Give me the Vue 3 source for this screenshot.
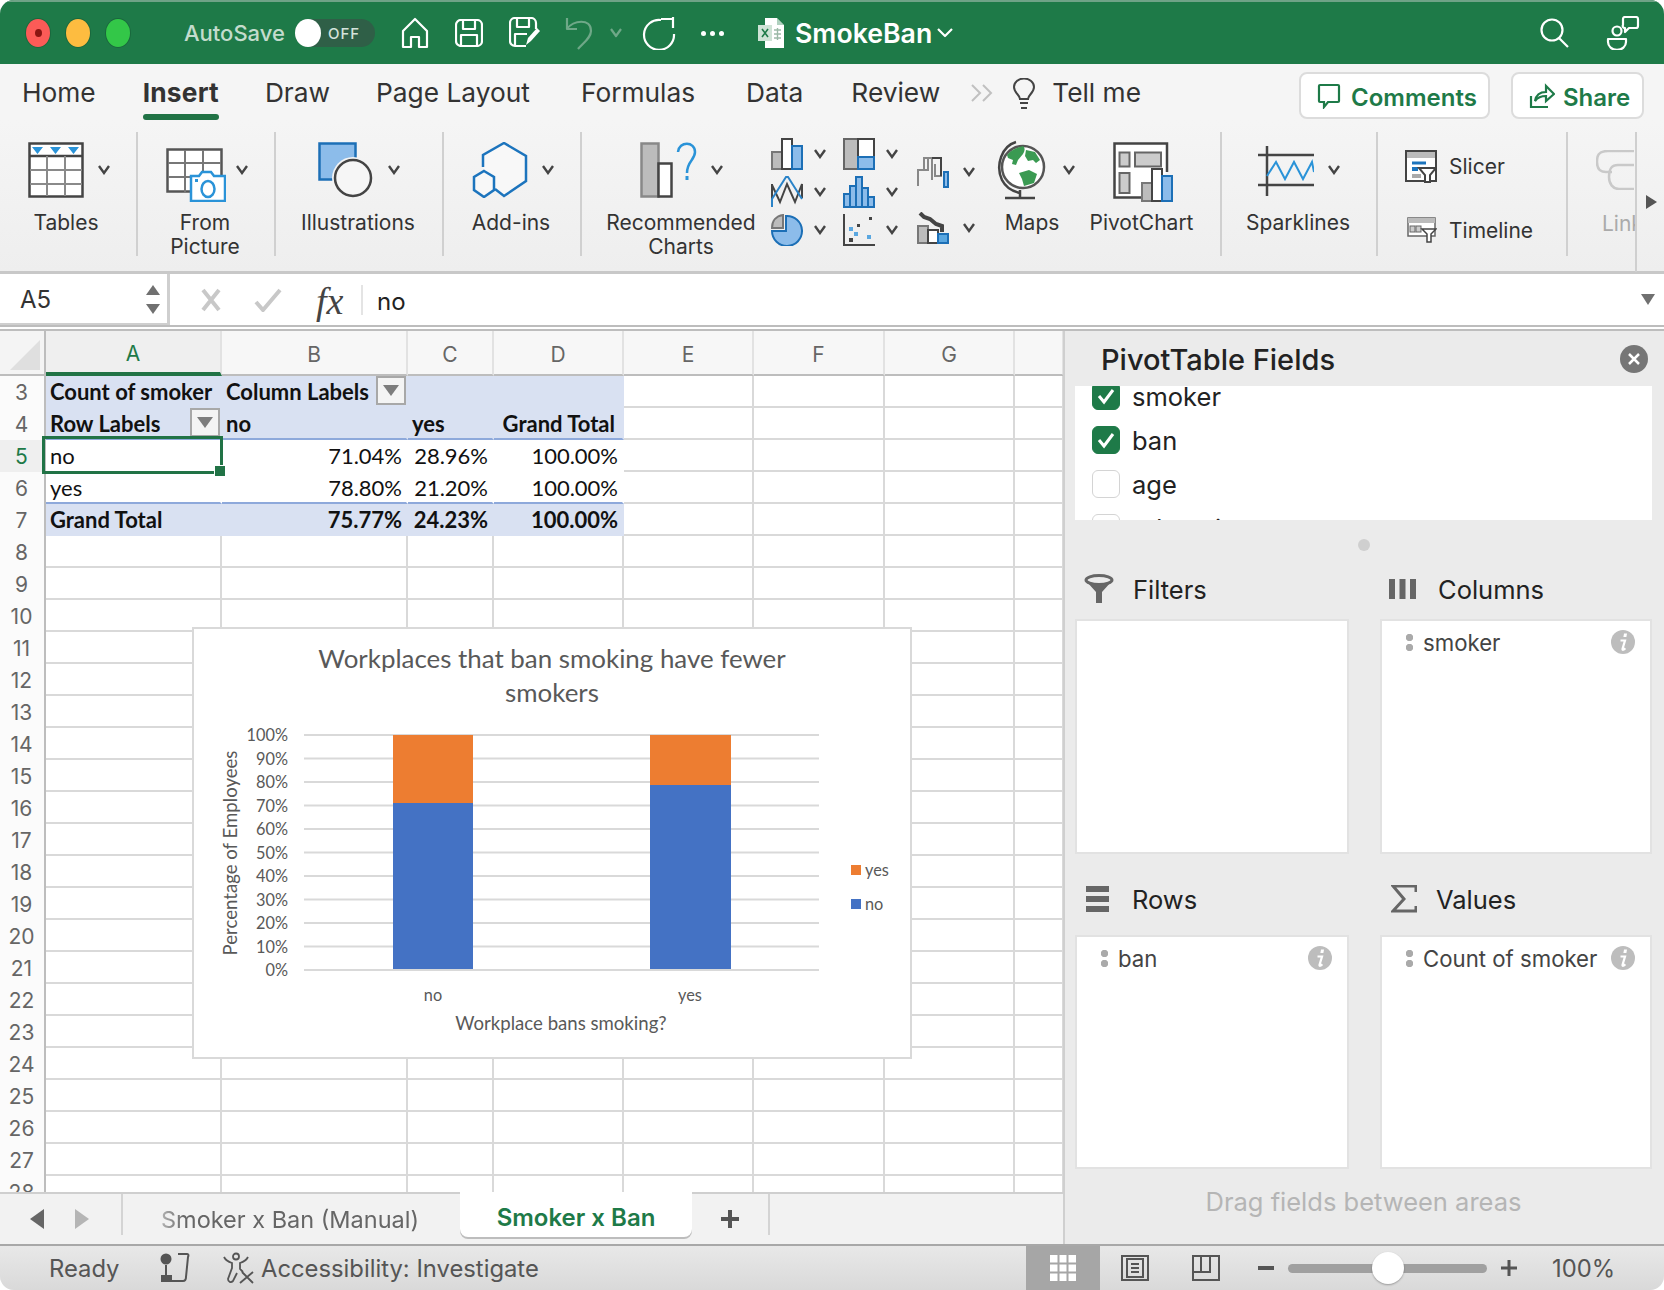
<script setup>
const tabs = ['Home', 'Insert', 'Draw', 'Page Layout', 'Formulas', 'Data', 'Review']

const columns = [
  { name: 'A', w: 176 },
  { name: 'B', w: 186 },
  { name: 'C', w: 86 },
  { name: 'D', w: 130 },
  { name: 'E', w: 130 },
  { name: 'F', w: 131 },
  { name: 'G', w: 130 },
  { name: '', w: 49 },
]
const gridCols = '46px ' + columns.map((c) => c.w + 'px').join(' ')

const pivot = {
  3: ['Count of smoker', 'Column Labels', '', ''],
  4: ['Row Labels', 'no', 'yes', 'Grand Total'],
  5: ['no', '71.04%', '28.96%', '100.00%'],
  6: ['yes', '78.80%', '21.20%', '100.00%'],
  7: ['Grand Total', '75.77%', '24.23%', '100.00%'],
}
const rows = []
for (let n = 3; n <= 28; n++) rows.push(n)

function cellText(row, col) {
  return pivot[row] && col < 4 ? pivot[row][col] : ''
}
function cellClass(row, col) {
  if (!pivot[row] || col > 3) return ''
  const c = []
  if (row === 3 || row === 4 || row === 7) c.push('fill', 'bold')
  else c.push('plain')
  if (row === 4 || row === 6) c.push('blue-line')
  if (col > 0 && row >= 5) c.push('right')
  if (row === 4 && col === 3) c.push('right', 'nudge')
  return c.join(' ')
}
function hasFilter(row, col) {
  return (row === 3 && col === 1) || (row === 4 && col === 0)
}

const ticks = []
for (let i = 0; i <= 10; i++) {
  ticks.push({ label: (100 - i * 10) + '%', y: 108 + i * 23.5 })
}
</script>

<template>
  <div class="window">
    <!-- title bar -->
    <header class="titlebar">
      <span class="light red"><i></i></span>
      <span class="light amber"></span>
      <span class="light green"></span>
      <span class="autosave">AutoSave</span>
      <span class="toggle"><b></b><em>OFF</em></span>
      <svg class="qa home" width="28" height="32" viewBox="0 0 28 32"><path d="M2 30V14L14 2l12 12v16h-8V20h-8v10z" /></svg>
      <svg class="qa save" width="28" height="28" viewBox="0 0 28 28"><rect x="1" y="1" width="26" height="26" rx="5" /><path d="M8 1v9h12V1M6 27V16h16v11" /></svg>
      <svg class="qa saveas" width="32" height="32" viewBox="0 0 32 32"><path d="M17 29H6a5 5 0 0 1-5-5V6a5 5 0 0 1 5-5h16a5 5 0 0 1 5 5v6M8 1v9h12V1M6 29V17h12" /><path class="solid" d="M17 28l2-7 9-10 3 3-9 10-5 4z" /></svg>
      <svg class="qa undo" width="30" height="34" viewBox="0 0 30 34"><path d="M3 2v11h10M3 13C9 4 27 2 27 15c0 7-8 12-13 18" /></svg>
      <svg class="qa undo-chev" width="12" height="10" viewBox="0 0 12 10"><path d="M1 1l5 7 5-7" /></svg>
      <svg class="qa redo" width="34" height="34" viewBox="0 0 34 34"><path d="M19 4a15 15 0 1 0 13 14M19 3h12V1M31 3v9" /></svg>
      <span class="more"><i></i><i></i><i></i></span>
      <svg class="file" width="26" height="30" viewBox="0 0 26 30"><path fill="#fff" d="M7 0h12l7 7v23H7z" /><path fill="#1e7a48" d="M19 0v7h7z" opacity=".35" /><rect y="7" width="14" height="16" fill="#cfe3d6" /><path d="M4 11l6 8M10 11l-6 8" stroke="#1e7a48" stroke-width="1.6" /><path d="M16 12h7M16 16h7M16 20h7M19.500 10v12" stroke="#9bb9a7" stroke-width="1.4" /></svg>
      <span class="docname">SmokeBan</span>
      <svg class="qa docchev" width="16" height="10" viewBox="0 0 16 10"><path d="M1 1l7 7 7-7" /></svg>
      <svg class="qa search" width="30" height="30" viewBox="0 0 30 30"><circle cx="12" cy="12" r="10.500" /><path d="M19 20l9 9" /></svg>
      <svg class="qa people" width="34" height="34" viewBox="0 0 34 34"><circle cx="11" cy="15" r="4.500" /><path d="M2 23h18v3a8 7 0 0 1-18 0z" /><path d="M17 9V3a2 2 0 0 1 2-2h11a2 2 0 0 1 2 2v7a2 2 0 0 1-2 2h-7l-4 4v-4a2 2 0 0 1-2-3z" /></svg>
    </header>

    <!-- ribbon tabs -->
    <nav class="tabrow">
      <span v-for="t in tabs" :key="t" class="tab" :class="{ active: t === 'Insert' }">{{ t }}</span>
      <svg class="overflow" width="24" height="20" viewBox="0 0 24 20"><path d="M2 2l8 8-8 8M13 2l8 8-8 8" /></svg>
      <svg class="bulb" width="24" height="32" viewBox="0 0 24 32"><path d="M8 21c0-4-6-6-6-12a10 8.500 0 0 1 20 0c0 6-6 8-6 12z" /><path d="M8 25h8M9 30h6" /></svg>
      <span class="tellme">Tell me</span>
      <button class="rbtn comments">
        <svg width="24" height="26" viewBox="0 0 24 26"><path d="M3 2h18a1 1 0 0 1 1 1v15a1 1 0 0 1-1 1H11l-4 5v-5H3a1 1 0 0 1-1-1V3a1 1 0 0 1 1-1z" /></svg>
        Comments
      </button>
      <button class="rbtn share">
        <svg width="26" height="26" viewBox="0 0 26 26"><path d="M2 13v11h17M6 18c1-6 5-9 11-9V3l8 8-8 7v-5c-5 0-8 1-11 5z" /></svg>
        Share
      </button>
    </nav>

    <!-- ribbon -->
    <section class="ribbon">
      <div class="group" style="width: 138px">
        <div class="item" style="width: 132px">
          <div class="icons" style="padding-left: 28px">
            <svg width="56" height="56" viewBox="0 0 56 56">
              <rect x="1.500" y="1.500" width="53" height="53" fill="#fff" stroke="#444" stroke-width="2.500" />
              <path d="M2 14h52" stroke="#444" stroke-width="2.500" />
              <path d="M2 28h52M2 42h52M19 14v40M37 14v40" stroke="#8a8a8a" stroke-width="2" />
              <path d="M4 5h11l-5.500 7zM22 5h11l-5.500 7zM40 5h11l-5.500 7z" fill="#2a93d8" />
            </svg>
            <svg class="chev" viewBox="0 0 12 10"><path d="M1 1l5 7 5-7" /></svg>
          </div>
          <span class="label">Tables</span>
        </div>
      </div>

      <div class="group" style="width: 138px">
        <div class="item" style="width: 134px">
          <div class="icons" style="padding-left: 28px">
            <svg class="pic-icon" width="60" height="54" viewBox="0 0 60 54">
              <path d="M1.500 1.500h54v42h-54z" fill="#fff" stroke="#555" stroke-width="2.500" />
              <path d="M19 2v42M37 2v42M2 15h53M2 29h53" stroke="#777" stroke-width="2" />
              <path d="M25 28h8l3-4h9l3 4h11v25H25z" fill="#fff" stroke="#2a93d8" stroke-width="2.500" />
              <ellipse cx="42" cy="41" rx="6.500" ry="8" fill="none" stroke="#2a93d8" stroke-width="2.500" />
              <rect x="29" y="31" width="3" height="3" fill="#2a93d8" />
            </svg>
            <svg class="chev tight" viewBox="0 0 12 10"><path d="M1 1l5 7 5-7" /></svg>
          </div>
          <span class="label">From<br />Picture</span>
        </div>
      </div>

      <div class="group" style="width: 168px">
        <div class="item" style="width: 164px">
          <div class="icons" style="padding-left: 42px">
            <svg width="56" height="56" viewBox="0 0 56 56">
              <rect x="1.500" y="1.500" width="36" height="36" fill="#8cbcea" stroke="#1c6fb6" stroke-width="2.500" />
              <circle cx="35" cy="36" r="21" fill="#f3f3f3" />
              <circle cx="35" cy="36" r="18" fill="#f6f6f6" stroke="#444" stroke-width="2.500" />
            </svg>
            <svg class="chev" viewBox="0 0 12 10"><path d="M1 1l5 7 5-7" /></svg>
          </div>
          <span class="label">Illustrations</span>
        </div>
      </div>

      <div class="group" style="width: 138px">
        <div class="item" style="width: 134px">
          <div class="icons" style="padding-left: 28px">
            <svg width="56" height="56" viewBox="0 0 56 56" fill="none" stroke="#1c74bd" stroke-width="2.500">
              <path d="M11 25V13L32 1l22 13v25L32 54l-9-7" fill="#f8f8f8" />
              <path d="M12 29l10 6v13l-10 7-10-7V35z" fill="#f8f8f8" />
            </svg>
            <svg class="chev" viewBox="0 0 12 10"><path d="M1 1l5 7 5-7" /></svg>
          </div>
          <span class="label">Add-ins</span>
        </div>
      </div>

      <div class="group" style="width: 640px">
        <div class="item" style="width: 180px; margin-left: 9px">
          <div class="icons" style="padding-left: 49px">
            <svg width="57" height="56" viewBox="0 0 57 56">
              <rect x="1.500" y="1.500" width="17" height="53" fill="#bcbcbc" stroke="#888" stroke-width="2.500" />
              <rect x="18.500" y="21.500" width="13" height="33" fill="#fff" stroke="#444" stroke-width="2.500" />
              <path d="M38 10c1-11 17-11 17 0 0 8-8 9-8 21" fill="none" stroke="#2a93d8" stroke-width="2.500" />
              <rect x="45.500" y="34" width="3" height="4" fill="#2a93d8" />
            </svg>
            <svg class="chev" viewBox="0 0 12 10"><path d="M1 1l5 7 5-7" /></svg>
          </div>
          <span class="label">Recommended<br />Charts</span>
        </div>

        <div class="gallery">
          <div class="gal-col first">
            <div class="gal-row">
              <svg width="32" height="32" viewBox="0 0 32 32">
                <rect x="1" y="14" width="10" height="17" fill="#bcbcbc" stroke="#777" stroke-width="2" />
                <rect x="11" y="1" width="10" height="30" fill="#fff" stroke="#444" stroke-width="2" />
                <rect x="21" y="8" width="10" height="23" fill="#8cbcea" stroke="#1c6fb6" stroke-width="2" />
              </svg>
              <svg class="chev" viewBox="0 0 12 10"><path d="M1 1l5 7 5-7" /></svg>
            </div>
            <div class="gal-row">
              <svg width="32" height="32" viewBox="0 0 32 32" fill="none" stroke-width="2">
                <path d="M1 8v18M1 9l8 17 7-18 8 18 7-18v14" stroke="#444" />
                <path d="M1 31v-8L15 1h2l14 22" stroke="#2a83c8" />
              </svg>
              <svg class="chev" viewBox="0 0 12 10"><path d="M1 1l5 7 5-7" /></svg>
            </div>
            <div class="gal-row">
              <svg width="32" height="32" viewBox="0 0 32 32">
                <path d="M15 2a15 15 0 1 1-14 15h14z" fill="#8cbcea" stroke="#1c6fb6" stroke-width="2" />
                <path d="M12 1v13H1C1 7 5 2 12 1z" fill="#bcbcbc" stroke="#777" stroke-width="2" />
              </svg>
              <svg class="chev" viewBox="0 0 12 10"><path d="M1 1l5 7 5-7" /></svg>
            </div>
          </div>
          <div class="gal-col second">
            <div class="gal-row">
              <svg width="32" height="32" viewBox="0 0 32 32">
                <rect x="1" y="1" width="14" height="30" fill="#bcbcbc" stroke="#666" stroke-width="2" />
                <rect x="15" y="1" width="16" height="18" fill="#fff" stroke="#444" stroke-width="2" />
                <rect x="15" y="19" width="16" height="12" fill="#8cbcea" stroke="#1c6fb6" stroke-width="2" />
              </svg>
              <svg class="chev" viewBox="0 0 12 10"><path d="M1 1l5 7 5-7" /></svg>
            </div>
            <div class="gal-row">
              <svg width="32" height="32" viewBox="0 0 32 32" fill="#8cbcea" stroke="#1c6fb6" stroke-width="2">
                <rect x="1" y="18" width="6" height="13" />
                <rect x="7" y="10" width="6" height="21" />
                <rect x="13" y="1" width="6" height="30" />
                <rect x="19" y="12" width="6" height="19" />
                <rect x="25" y="21" width="6" height="10" />
              </svg>
              <svg class="chev" viewBox="0 0 12 10"><path d="M1 1l5 7 5-7" /></svg>
            </div>
            <div class="gal-row">
              <svg width="32" height="32" viewBox="0 0 32 32">
                <path d="M1 0v31h31" fill="none" stroke="#444" stroke-width="2" />
                <g fill="#5aa7e0">
                  <rect x="6" y="13" width="4" height="4" />
                  <rect x="11" y="18" width="4" height="4" />
                  <rect x="24" y="21" width="4" height="4" />
                </g>
                <g fill="#444">
                  <rect x="26" y="3" width="3" height="3" />
                  <rect x="14" y="10" width="3" height="3" />
                  <rect x="6" y="24" width="4" height="4" />
                </g>
              </svg>
              <svg class="chev" viewBox="0 0 12 10"><path d="M1 1l5 7 5-7" /></svg>
            </div>
          </div>
          <div class="gal-col third">
            <div class="gal-row">
              <svg width="32" height="32" viewBox="0 0 32 32" fill="none" stroke-width="2">
                <path d="M1 30V14h6V2h8v22" stroke="#888" />
                <path d="M7 14h4V2M15 2h9v18h-6V8" stroke="#888" />
                <path d="M15 2h9v18" stroke="#444" />
                <path d="M27 16h4v15h-4z" stroke="#1c6fb6" fill="#8cbcea" />
              </svg>
              <svg class="chev" viewBox="0 0 12 10"><path d="M1 1l5 7 5-7" /></svg>
            </div>
            <div class="gal-row">
              <svg width="32" height="32" viewBox="0 0 32 32">
                <path d="M3 1l4 4 6 2 6 5 6 2v6" fill="none" stroke="#444" stroke-width="4" />
                <rect x="1" y="14" width="10" height="17" fill="#bcbcbc" stroke="#777" stroke-width="2" />
                <rect x="11" y="18" width="10" height="13" fill="#fff" stroke="#444" stroke-width="2" />
                <rect x="21" y="22" width="10" height="9" fill="#5aa7e0" stroke="#1c6fb6" stroke-width="2" />
              </svg>
              <svg class="chev" viewBox="0 0 12 10"><path d="M1 1l5 7 5-7" /></svg>
            </div>
          </div>
        </div>

        <div class="item" style="width: 104px">
          <div class="icons maps" style="padding-left: 16px">
            <svg width="50" height="60" viewBox="0 0 50 60">
              <circle cx="27" cy="27" r="21" fill="#fff" stroke="#555" stroke-width="2.500" />
              <path d="M11 15c5-6 12-8 16-9 3 3 1 6 0 8l-5 6-2 5-4-1 1-4-5-2z" fill="#3a9a52" />
              <path d="M30 10l9 2 5 8-4 3-3-3-5 1-3-5zM23 33l10-3 8 4-3 9-10 3-2-7z" fill="#3a9a52" />
              <path d="M20 2C6 6-1 25 6 40c3 6 9 11 18 13" fill="none" stroke="#444" stroke-width="2.500" />
              <path d="M24 50v7M9 58h30" stroke="#444" stroke-width="2.500" />
            </svg>
            <svg class="chev" viewBox="0 0 12 10"><path d="M1 1l5 7 5-7" /></svg>
          </div>
          <span class="label">Maps</span>
        </div>

        <div class="item" style="width: 115px">
          <div class="icons" style="padding-left: 29px">
            <svg width="60" height="60" viewBox="0 0 60 60">
              <path d="M54 30V1.500H1.500v54H28" fill="#fff" stroke="#444" stroke-width="2.500" />
              <rect x="6.500" y="10.500" width="10" height="14" fill="#ccc" stroke="#666" stroke-width="2" />
              <rect x="22" y="10.500" width="26" height="14" fill="#ccc" stroke="#666" stroke-width="2" />
              <rect x="6.500" y="31" width="10" height="20" fill="#ccc" stroke="#666" stroke-width="2" />
              <rect x="29" y="41" width="10" height="18" fill="#bcbcbc" stroke="#777" stroke-width="2" />
              <rect x="39" y="27" width="10" height="32" fill="#fff" stroke="#444" stroke-width="2" />
              <rect x="49" y="34" width="10" height="25" fill="#8cbcea" stroke="#1c6fb6" stroke-width="2" />
            </svg>
          </div>
          <span class="label">PivotChart</span>
        </div>
      </div>

      <div class="group" style="width: 156px">
        <div class="item" style="width: 152px">
          <div class="icons spark" style="padding-left: 36px">
            <svg width="56" height="50" viewBox="0 0 56 50" fill="none">
              <path d="M9 0v50M0 9h56M0 39h56" stroke="#444" stroke-width="2.500" />
              <path d="M9 30l9-14 9 17 9-17 9 17 9-17 2 10" stroke="#2a93d8" stroke-width="2" />
            </svg>
            <svg class="chev" viewBox="0 0 12 10"><path d="M1 1l5 7 5-7" /></svg>
          </div>
          <span class="label">Sparklines</span>
        </div>
      </div>

      <div class="group side" style="width: 190px">
        <div class="side-row">
          <svg width="32" height="33" viewBox="0 0 32 33">
            <rect x="1" y="1" width="30" height="30" fill="#fff" stroke="#444" stroke-width="2" />
            <rect x="2" y="2" width="28" height="6" fill="#bbb" />
            <path d="M7 13h14" stroke="#1c74bd" stroke-width="3" />
            <rect x="7" y="17" width="6" height="4" fill="#1c74bd" />
            <rect x="7" y="24" width="9" height="4" fill="#aaa" />
            <path d="M14 18h17l-6 7v7h-5v-7z" fill="#fff" stroke="#444" stroke-width="2" />
          </svg>
          <span>Slicer</span>
        </div>
        <div class="side-row timeline">
          <svg width="30" height="26" viewBox="0 0 30 26">
            <rect x="1" y="1" width="27" height="18" fill="#fff" stroke="#666" stroke-width="1.500" />
            <rect x="1" y="1" width="27" height="5" fill="#bbb" />
            <rect x="3" y="9" width="5" height="6" fill="#ccc" stroke="#666" />
            <rect x="9" y="9" width="5" height="6" fill="#ccc" stroke="#666" />
            <path d="M15 12h14l-5 5v8h-4v-8z" fill="#fff" stroke="#444" stroke-width="1.500" />
          </svg>
          <span>Timeline</span>
        </div>
      </div>

      <div class="group link" style="width: 67px">
        <svg width="38" height="40" viewBox="0 0 38 40" fill="none" stroke="#c9c9c9" stroke-width="2.500">
          <path d="M38 1H12C2 1 1 6 1 12c0 6 3 10 9 10h6" />
          <path d="M38 15H22c-8 0-9 6-9 12 0 7 4 12 10 12h15" />
        </svg>
        <span>Link</span>
      </div>

      <div class="scroller"><i></i></div>
    </section>

    <!-- formula bar -->
    <section class="formula">
      <div class="namebox">
        <span>A5</span>
        <span class="spin"><i class="up"></i><i class="down"></i></span>
      </div>
      <svg class="fb-x" width="22" height="24" viewBox="0 0 22 24"><path d="M3 2l16 20M19 2L3 22" /></svg>
      <svg class="fb-ok" width="28" height="24" viewBox="0 0 28 24"><path d="M2 14l7 8L26 2" /></svg>
      <span class="fx">fx</span>
      <span class="fb-sep"></span>
      <span class="fb-val">no</span>
      <i class="fb-drop"></i>
    </section>

    <div class="main">
      <div class="left">
        <!-- worksheet -->
        <div class="sheet">
          <div class="row head" :style="{ gridTemplateColumns: gridCols }">
            <div class="corner"><i></i></div>
            <div
              v-for="c in columns"
              :key="c.name"
              class="colhead"
              :class="{ sel: c.name === 'A' }"
            >{{ c.name }}</div>
          </div>
          <div v-for="r in rows" :key="r" class="row" :style="{ gridTemplateColumns: gridCols }">
            <div class="rowhead" :class="{ sel: r === 5 }">{{ r }}</div>
            <div v-for="(c, i) in columns" :key="c.name" class="cell" :class="cellClass(r, i)">
              <span>{{ cellText(r, i) }}</span>
              <span v-if="hasFilter(r, i)" class="filter"><i></i></span>
            </div>
          </div>

          <div class="selection"><i></i></div>

          <!-- chart sits over the cells -->
          <div class="chart">
            <svg width="720" height="432" viewBox="0 0 720 432">
              <text class="c-title" x="360" y="41" text-anchor="middle">Workplaces that ban smoking have fewer</text>
              <text class="c-title" x="360" y="75" text-anchor="middle">smokers</text>
              <g v-for="t in ticks" :key="t.label">
                <line x1="112" x2="627" :y1="t.y" :y2="t.y" stroke="#d9d9d9" stroke-width="2" />
                <text class="c-tick" x="96" :y="t.y + 6" text-anchor="end">{{ t.label }}</text>
              </g>
              <rect x="201" y="108" width="80" height="68" fill="#ed7d31" />
              <rect x="201" y="176" width="80" height="166" fill="#4472c4" />
              <rect x="458" y="108" width="81" height="50" fill="#ed7d31" />
              <rect x="458" y="158" width="81" height="184" fill="#4472c4" />
              <text class="c-axis" transform="translate(45 226) rotate(-90)" text-anchor="middle">Percentage of Employees</text>
              <text class="c-tick" x="241" y="374" text-anchor="middle">no</text>
              <text class="c-tick" x="498" y="374" text-anchor="middle">yes</text>
              <text class="c-axis" x="369" y="403" text-anchor="middle">Workplace bans smoking?</text>
              <rect x="659" y="238" width="10" height="10" fill="#ed7d31" />
              <text class="c-tick" x="673" y="249">yes</text>
              <rect x="659" y="272" width="10" height="10" fill="#4472c4" />
              <text class="c-tick" x="673" y="283">no</text>
            </svg>
          </div>
        </div>

        <!-- sheet tabs -->
        <div class="sheettabs">
          <i class="nav prev"></i>
          <i class="nav next"></i>
          <span class="st-sep"></span>
          <span class="st-name">Smoker x Ban (Manual)</span>
          <span class="st-active">Smoker x Ban</span>
          <svg class="st-plus" width="20" height="20" viewBox="0 0 20 20"><path d="M10 1v18M1 10h18" /></svg>
          <span class="st-sep end"></span>
        </div>
      </div>

      <!-- pivot panel -->
      <aside class="panel">
        <div class="p-title">
          <span>PivotTable Fields</span>
          <svg width="28" height="28" viewBox="0 0 28 28"><circle cx="14" cy="14" r="14" fill="#767676" /><path d="M9 9l10 10M19 9L9 19" stroke="#fff" stroke-width="2.500" /></svg>
        </div>
        <div class="fields">
          <div class="field first">
            <span class="check on"><svg width="20" height="18" viewBox="0 0 20 18"><path d="M3 9l5 6L17 3" /></svg></span>smoker
          </div>
          <div class="field">
            <span class="check on"><svg width="20" height="18" viewBox="0 0 20 18"><path d="M3 9l5 6L17 3" /></svg></span>ban
          </div>
          <div class="field"><span class="check"></span>age</div>
          <div class="field"><span class="check"></span>education</div>
        </div>
        <div class="handle"><i></i></div>

        <div class="areas">
          <div class="a-head">
            <svg width="30" height="30" viewBox="0 0 30 30"><ellipse cx="15" cy="6" rx="13" ry="4.500" fill="none" stroke="#666" stroke-width="3" /><path d="M3 8l9 10v11h6V18l9-10c-6 3-18 3-24 0z" fill="#666" /></svg>
            <span>Filters</span>
          </div>
          <div class="a-head col2">
            <svg width="28" height="20" viewBox="0 0 28 20" fill="#666"><rect width="6" height="20" /><rect x="10.500" width="6" height="20" /><rect x="21" width="6" height="20" /></svg>
            <span>Columns</span>
          </div>
          <div class="a-box"></div>
          <div class="a-box">
            <div class="a-item">
              <span class="dots"></span>
              <span class="a-name">smoker</span>
              <svg class="info" width="24" height="24" viewBox="0 0 24 24"><circle cx="12" cy="12" r="12" fill="#bdbdbd" /><path d="M13 3.500h3l-.6 3.500h-3z" fill="#fff" /><path d="M9.500 10.500h4.500L11.500 19c-.2 1.300 1.200 1 2.800-.8" fill="none" stroke="#fff" stroke-width="2.200" /></svg>
            </div>
          </div>

          <div class="a-head second">
            <svg width="24" height="26" viewBox="0 0 24 26" fill="#666"><rect width="23" height="6" /><rect y="10" width="23" height="6" /><rect y="20" width="23" height="6" /></svg>
            <span>Rows</span>
          </div>
          <div class="a-head second col2 vals">
            <svg width="26" height="28" viewBox="0 0 26 28"><path d="M25 7V1H2l11 13L2 26h23v-5" fill="none" stroke="#666" stroke-width="3" /></svg>
            <span>Values</span>
          </div>
          <div class="a-box low">
            <div class="a-item">
              <span class="dots"></span>
              <span class="a-name">ban</span>
              <svg class="info" width="24" height="24" viewBox="0 0 24 24"><circle cx="12" cy="12" r="12" fill="#bdbdbd" /><path d="M13 3.500h3l-.6 3.500h-3z" fill="#fff" /><path d="M9.500 10.500h4.500L11.500 19c-.2 1.300 1.200 1 2.800-.8" fill="none" stroke="#fff" stroke-width="2.200" /></svg>
            </div>
          </div>
          <div class="a-box low">
            <div class="a-item">
              <span class="dots"></span>
              <span class="a-name">Count of smoker</span>
              <svg class="info" width="24" height="24" viewBox="0 0 24 24"><circle cx="12" cy="12" r="12" fill="#bdbdbd" /><path d="M13 3.500h3l-.6 3.500h-3z" fill="#fff" /><path d="M9.500 10.500h4.500L11.500 19c-.2 1.300 1.200 1 2.800-.8" fill="none" stroke="#fff" stroke-width="2.200" /></svg>
            </div>
          </div>
        </div>
        <div class="drag">Drag fields between areas</div>
      </aside>
    </div>

    <!-- status bar -->
    <footer class="status">
      <span class="ready">Ready</span>
      <svg class="st-macro" width="30" height="30" viewBox="0 0 30 30"><circle cx="6" cy="6" r="5.500" fill="#555" /><path d="M6 12v11M18 1h9c1 0 2 1 1 3l-2 20c0 2-1 4-3 4H6" fill="none" stroke="#555" stroke-width="2" /><rect x="1" y="22" width="11" height="7" fill="#555" /></svg>
      <svg class="st-acc" width="32" height="32" viewBox="0 0 32 32" fill="none" stroke="#555" stroke-width="1.800"><circle cx="14" cy="4.500" r="3" /><path d="M2 5c2 4 5 5 8 6v5L6 27c0 3 3 4 5 2l4-8M26 5c-2 4-5 5-8 6v6l3 3" /><path d="M20 20l11 11M31 20L18 31" /></svg>
      <span class="acc">Accessibility: Investigate</span>
      <div class="views">
        <span class="view on">
          <svg width="26" height="26" viewBox="0 0 26 26" fill="#fff"><rect width="26" height="26" fill="#fff" /><path d="M8.500 0v26M17.500 0v26M0 8.500h26M0 17.500h26" stroke="#a6a6a6" stroke-width="2" /></svg>
        </span>
        <svg class="view-ic" width="28" height="26" viewBox="0 0 28 26" fill="none" stroke="#555" stroke-width="2"><rect x="1" y="1" width="26" height="24" /><rect x="6" y="4" width="16" height="18" /><path d="M10 9h8M10 13h8M10 17h8" /></svg>
        <svg class="view-ic second" width="28" height="26" viewBox="0 0 28 26" fill="none" stroke="#555" stroke-width="2"><rect x="1" y="1" width="26" height="24" /><path d="M1 17h17V1M9 1v16" /></svg>
      </div>
      <i class="z-minus"></i>
      <div class="slider"><b></b></div>
      <svg class="z-plus" width="16" height="16" viewBox="0 0 16 16"><path d="M8 0v16M0 8h16" stroke="#555" stroke-width="3" /></svg>
      <span class="zoom">100%</span>
    </footer>
  </div>
</template>

<style scoped>
.window {
  width: 1664px;
  height: 1290px;
  display: flex;
  flex-direction: column;
  overflow: hidden;
  border-radius: 14px;
  background: #f2f2f2;
  font-family: Inter, "Noto Sans", sans-serif;
  color: #333;
}

/* title bar */
.titlebar {
  height: 64px;
  flex: none;
  display: flex;
  align-items: center;
  box-sizing: border-box;
  background: #1e7a48;
  border-top: 2px solid #6fa387;
  padding-left: 26px;
  color: #fff;
}
.light {
  width: 24px;
  height: 28px;
  border-radius: 50%;
  margin-right: 16px;
  box-sizing: border-box;
  display: flex;
  align-items: center;
  justify-content: center;
  box-shadow: 0 0 0 1px rgba(0, 0, 0, 0.15);
}
.light.red { background: #fc5b57; }
.light.red i { width: 7px; height: 8px; border-radius: 50%; background: #8a1512; }
.light.amber { background: #fdbc40; }
.light.green { background: #33c748; }
.autosave {
  margin-left: 38px;
  font-size: 22px;
  font-weight: 500;
  color: #c3dccd;
  width: 110px;
}
.toggle {
  width: 80px;
  height: 28px;
  border-radius: 14px;
  background: #2f5f47;
  display: flex;
  align-items: center;
  margin-left: 1px;
}
.toggle b { width: 26px; height: 28px; border-radius: 50%; background: #fff; }
.toggle em {
  font-style: normal;
  font-size: 15px;
  font-weight: 500;
  margin-left: 7px;
  letter-spacing: 1px;
  color: #d5e3db;
}
.qa { fill: none; stroke: #fff; stroke-width: 2.200; flex: none; stroke-linejoin: round; }
.qa .solid { fill: #fff; stroke: none; }
.home { margin-left: 26px; }
.save { margin-left: 26px; }
.saveas { margin-left: 26px; }
.undo { margin-left: 23px; stroke: #6fa888; }
.undo-chev { margin-left: 16px; stroke: #6fa888; }
.redo { margin-left: 20px; }
.more { display: flex; gap: 4px; margin-left: 25px; width: 26px; }
.more i { width: 5px; height: 5px; border-radius: 50%; background: #fff; }
.file { margin-left: 31px; flex: none; }
.docname { margin-left: 11px; font-size: 26.700px; font-weight: 600; }
.docchev { margin-left: 5px; }
.search { margin-left: auto; }
.people { margin-left: 36px; margin-right: 24px; }

/* tabs */
.tabrow {
  height: 56px;
  flex: none;
  display: flex;
  align-items: flex-start;
  box-sizing: border-box;
  padding-left: 22px;
  gap: 48px;
  background: #f5f5f5;
}
.tab {
  position: relative;
  line-height: 36px;
  padding-top: 11px;
  font-size: 26.300px;
  height: 56px;
  box-sizing: border-box;
  white-space: nowrap;
}
.tab:nth-child(3) { margin-left: -2px; }
.tab:nth-child(4) { margin-left: -2px; }
.tab:nth-child(5) { margin-left: 3px; }
.tab:nth-child(6) { margin-left: 3px; }
.tab.active { font-weight: 700; letter-spacing: 0.2px; margin-left: -1px; }
.tab.active::after {
  content: '';
  position: absolute;
  left: 0;
  right: 0;
  bottom: 0;
  height: 6px;
  border-radius: 3px;
  background: #217346;
}
.overflow { fill: none; stroke: #c0c0c0; stroke-width: 2; margin: 19px 0 0 -18px; }
.bulb { fill: none; stroke: #444; stroke-width: 2; margin: 14px 0 0 -30px; }
.tellme { line-height: 36px; margin: 11px 0 0 -32px; font-size: 26.300px; }
.rbtn {
  height: 47px;
  margin-top: 8px;
  background: #fff;
  border: 2px solid #dcdcdc;
  border-radius: 8px;
  display: flex;
  align-items: center;
  font: 600 24px Inter, "Noto Sans", sans-serif;
  color: #1e7a48;
  padding: 3px 0 0;
  box-sizing: border-box;
}
.rbtn svg { fill: none; stroke: #1e7a48; stroke-width: 2.200; flex: none; margin-top: -3px; }
.comments { width: 191px; padding-left: 16px; gap: 10px; margin-left: auto; }
.share { width: 133px; padding-left: 16px; gap: 8px; margin-left: -27px; margin-right: 20px; }

/* ribbon */
.ribbon {
  height: 154px;
  flex: none;
  display: flex;
  align-items: flex-start;
  box-sizing: border-box;
  border-bottom: 3px solid #c8c8c8;
  background: linear-gradient(#f5f5f5, #eeeeee);
  padding-top: 12px;
}
.group {
  height: 124px;
  flex: none;
  display: flex;
  box-sizing: border-box;
  border-right: 2px solid #d0d0d0;
}
.item { flex: none; display: flex; flex-direction: column; }
.icons { height: 79px; flex: none; display: flex; align-items: flex-start; padding-top: 10px; box-sizing: border-box; }
.pic-icon { margin-top: 6px; }
.chev {
  width: 12px;
  height: 10px;
  flex: none;
  fill: none;
  stroke: #444;
  stroke-width: 2.400;
  margin: 23px 0 0 14px;
}
.chev.tight { margin-left: 10px; }
.label {
  font-size: 21px;
  line-height: 24px;
  text-align: center;
  white-space: nowrap;
}
.maps { padding-top: 8px; }
.maps .chev { margin: 25px 0 0 17px; }
.spark { padding-top: 14px; }
.spark .chev { margin-top: 19px; }
.gallery { display: flex; padding-top: 6px; width: 209px; flex: none; }
.gal-col { flex: none; display: flex; flex-direction: column; }
.gal-col.first { width: 72px; }
.gal-col.second { width: 74px; }
.gal-col.third { padding-top: 18px; gap: 24px; }
.gal-row { height: 38px; display: flex; align-items: flex-start; }
.gal-col.third .gal-row { height: 32px; }
.gal-row .chev { margin: 11px 0 0 11px; }
.gal-col.third .gal-row .chev { margin-left: 14px; }
.side { flex-direction: column; padding: 18px 0 0 27px; gap: 34px; }
.side-row { display: flex; align-items: center; gap: 12px; height: 33px; font-size: 21px; }
.timeline { height: 26px; margin-left: 2px; gap: 12px; }
.link {
  flex-direction: column;
  padding-left: 28px;
  padding-top: 18px;
  overflow: hidden;
  height: 124px;
  font-size: 21px;
  color: #aaa;
  border-right: 0;
}
.link span { line-height: 24px; margin: 22px 0 0 6px; white-space: nowrap; }
.scroller {
  width: 29px;
  height: 140px;
  flex: none;
  box-sizing: border-box;
  border-left: 2px solid #cfcfcf;
  display: flex;
  align-items: center;
  justify-content: center;
}
.scroller i {
  width: 0;
  height: 0;
  border-left: 11px solid #555;
  border-top: 7px solid transparent;
  border-bottom: 7px solid transparent;
  margin-left: 2px;
}

/* formula bar */
.formula {
  height: 57px;
  flex: none;
  display: flex;
  align-items: center;
  box-sizing: border-box;
  background: #fff;
  border-bottom: 6px double #bdbdbd;
}
.namebox {
  width: 170px;
  height: 51px;
  flex: none;
  box-sizing: border-box;
  border-right: 3px solid #cfcfcf;
  border-bottom: 2px solid #cfcfcf;
  display: flex;
  align-items: center;
  justify-content: space-between;
  padding: 1px 7px 0 20px;
  font-size: 24px;
}
.spin { display: flex; flex-direction: column; gap: 9px; }
.spin i { width: 0; height: 0; border-left: 7px solid transparent; border-right: 7px solid transparent; }
.spin .up { border-bottom: 10px solid #707070; }
.spin .down { border-top: 10px solid #707070; }
.fb-x { fill: none; stroke: #c8c8c8; stroke-width: 4; margin-left: 30px; }
.fb-ok { fill: none; stroke: #c8c8c8; stroke-width: 4; margin-left: 32px; }
.fx {
  font-family: "Liberation Serif", serif;
  font-style: italic;
  font-size: 38px;
  line-height: 44px;
  margin-left: 34px;
  padding-top: 2px;
  color: #444;
  width: 45px;
}
.fb-sep { width: 2px; height: 30px; background: #e4e4e4; }
.fb-val { margin-left: 14px; padding-top: 3px; font-size: 24px; color: #222; }
.fb-drop {
  margin-left: auto;
  margin-right: 9px;
  width: 0;
  height: 0;
  border-left: 7px solid transparent;
  border-right: 7px solid transparent;
  border-top: 11px solid #707070;
}

/* main area */
.main { flex: 1; min-height: 0; display: flex; }
.left { width: 1063px; flex: none; display: flex; flex-direction: column; }
.sheet {
  position: relative;
  height: 861px;
  flex: none;
  overflow: hidden;
  background: #fff;
  font-family: Lato, "Open Sans", sans-serif;
  font-size: 22px;
  color: #111;
}
.row { display: grid; height: 32px; grid-template-rows: 32px; }
.row.head { height: 45px; grid-template-rows: 45px; }
.corner {
  background: #f4f4f4;
  border-right: 2px solid #bdbdbd;
  border-bottom: 2px solid #bdbdbd;
  position: relative;
}
.corner i {
  position: absolute;
  left: 10px;
  top: 9px;
  width: 30px;
  height: 30px;
  background: #dfdfdf;
  clip-path: polygon(100% 0, 100% 100%, 0 100%);
}
.colhead {
  background: #f7f7f7;
  border-right: 2px solid #e2e2e2;
  border-bottom: 2px solid #bdbdbd;
  font-family: Inter, "Noto Sans", sans-serif;
  font-size: 21px;
  color: #666;
  display: flex;
  align-items: center;
  justify-content: center;
  box-sizing: border-box;
  padding-top: 3px;
}
.colhead.sel { background: #efefef; color: #1e7a48; border-bottom: 4px solid #217346; }
.rowhead {
  background: #fbfbfb;
  border-right: 2px solid #bdbdbd;
  font-family: Inter, "Noto Sans", sans-serif;
  font-size: 21px;
  color: #666;
  line-height: 34px;
  text-align: center;
  padding-right: 1px;
}
.rowhead.sel { background: #efefef; color: #1e7a48; }
.cell {
  box-sizing: border-box;
  border-right: 2px solid #d9d9d9;
  border-bottom: 2px solid #d9d9d9;
  padding: 0 4px 0 4px;
  line-height: 32px;
  white-space: nowrap;
  display: flex;
  min-width: 0;
}
.cell > span:first-child { height: 30px; }
.cell.fill { background: #d9e1f2; border-color: #d9e1f2; }
.cell.plain { border-color: #fff; }
.cell.blue-line { border-bottom-color: #8ea9db; }
.cell.bold { font-weight: 700; }
.cell.right { justify-content: flex-end; }
.cell.nudge { padding-right: 7px; }
.filter {
  margin: 0 -4px 0 auto;
  width: 30px;
  height: 29px;
  flex: none;
  box-sizing: border-box;
  background: #f4f4f4;
  border: 2px solid #a8a8a8;
  display: flex;
  align-items: center;
  justify-content: center;
}
.filter i {
  width: 0;
  height: 0;
  border-left: 8px solid transparent;
  border-right: 8px solid transparent;
  border-top: 11px solid #7d7d7d;
}
.selection {
  position: absolute;
  left: 42px;
  top: 105px;
  width: 181px;
  height: 38px;
  box-sizing: border-box;
  border: 3.500px solid #217346;
}
.selection i {
  position: absolute;
  right: -5px;
  bottom: -5px;
  width: 10px;
  height: 10px;
  background: #217346;
  outline: 1px solid #fff;
}
.chart {
  position: absolute;
  left: 192px;
  top: 296px;
  width: 720px;
  height: 432px;
  box-sizing: border-box;
  background: #fff;
  outline: 2px solid #d9d9d9;
  outline-offset: -2px;
}
.chart svg { display: block; }
.c-title { font: 25.900px Lato, sans-serif; fill: #595959; }
.c-tick { font: 16.300px Lato, sans-serif; fill: #595959; }
.c-axis { font: 18.600px Lato, sans-serif; fill: #595959; }

/* sheet tabs */
.sheettabs {
  flex: 1;
  display: flex;
  align-items: flex-start;
  box-sizing: border-box;
  background: #f2f2f2;
  border-top: 2px solid #cfcfcf;
}
.nav {
  width: 0;
  height: 0;
  border-top: 10px solid transparent;
  border-bottom: 10px solid transparent;
  margin-top: 15px;
}
.nav.prev { border-right: 14px solid #666; margin-left: 30px; }
.nav.next { border-left: 14px solid #b5b5b5; margin-left: 31px; }
.st-sep { width: 2px; height: 41px; background: #d4d4d4; margin-left: 32px; }
.st-name {
  margin-left: 38px;
  width: 299px;
  line-height: 52px;
  font-size: 23.500px;
  color: #666;
  white-space: nowrap;
  -webkit-mask-image: linear-gradient(90deg, rgba(0, 0, 0, 0.45), #000 8%);
  mask-image: linear-gradient(90deg, rgba(0, 0, 0, 0.45), #000 8%);
}
.st-active {
  width: 232px;
  height: 45px;
  margin-top: -2px;
  box-sizing: border-box;
  background: #fff;
  border-radius: 0 0 8px 8px;
  box-shadow: 0 2px 0 #bdbdbd;
  text-align: center;
  line-height: 52px;
  font-size: 24px;
  font-weight: 600;
  color: #1e7a48;
}
.st-plus { fill: none; stroke: #555; stroke-width: 4; margin: 15px 0 0 28px; }
.st-sep.end { margin-left: 28px; }

/* panel */
.panel {
  flex: 1;
  box-sizing: border-box;
  background: #ebebeb;
  border-left: 2px solid #cfcfcf;
  padding: 0 12px 0 10px;
  display: flex;
  flex-direction: column;
}
.p-title {
  height: 55px;
  flex: none;
  display: flex;
  align-items: center;
  justify-content: space-between;
  padding-left: 26px;
  padding-right: 4px;
  font-size: 29px;
  font-weight: 500;
  color: #222;
}
.p-title span { padding-top: 2px; }
.fields {
  height: 134px;
  flex: none;
  overflow: hidden;
  background: #fff;
  font-size: 25.500px;
  color: #222;
}
.field {
  display: flex;
  align-items: center;
  height: 44px;
  gap: 12px;
  padding-left: 17px;
}
.field.first { margin-top: -12px; }
.check {
  width: 28px;
  height: 28px;
  flex: none;
  box-sizing: border-box;
  border-radius: 6px;
  border: 1.500px solid #d4d4d4;
  background: #fff;
  display: flex;
  align-items: center;
  justify-content: center;
}
.check.on { background: #1e7a48; border-color: #1e7a48; }
.check svg { fill: none; stroke: #fff; stroke-width: 3; }
.handle { height: 50px; flex: none; display: flex; align-items: center; justify-content: center; }
.handle i { width: 12px; height: 12px; border-radius: 50%; background: #cfcfcf; }
.areas {
  display: grid;
  grid-template-columns: 274px 272px;
  column-gap: 31px;
  grid-template-rows: 38px 246px 64px 251px;
}
.a-head {
  display: flex;
  align-items: center;
  font-size: 25.500px;
  color: #222;
  padding-left: 9px;
  gap: 19px;
}
.a-head.col2 { gap: 21px; }
.a-head.second { margin-top: 26px; gap: 22px; }
.a-head.second svg { margin-left: 2px; }
.a-head.vals { gap: 19px; }
.a-box {
  background: #fff;
  box-sizing: border-box;
  border: 2px solid #e2e2e2;
  margin-top: 11px;
}
.a-box.low { margin-top: 17px; }
.a-item {
  display: flex;
  align-items: center;
  height: 42px;
  font-size: 22.200px;
  color: #444;
  padding-left: 24px;
  padding-right: 15px;
}
.dots {
  width: 7px;
  height: 17px;
  flex: none;
  margin-right: 10px;
  background: radial-gradient(circle at 3.500px 3.500px, #aaa 3.500px, transparent 3.800px),
    radial-gradient(circle at 3.500px 13.500px, #aaa 3.500px, transparent 3.800px);
}
.a-name { flex: 1; white-space: nowrap; }
.info { flex: none; }
.drag {
  margin-top: 17px;
  text-align: center;
  line-height: 32px;
  font-size: 25.500px;
  color: #b5b5b5;
  white-space: nowrap;
}

/* status */
.status {
  height: 46px;
  flex: none;
  display: flex;
  align-items: center;
  box-sizing: border-box;
  border-top: 2px solid #a8a8a8;
  background: linear-gradient(#e8e8e8, #d9d9d9);
  padding-left: 49px;
  font-size: 23.800px;
  color: #555;
}
.ready { width: 111px; }
.st-macro { flex: none; }
.st-acc { flex: none; margin-left: 32px; margin-right: 7px; }
.acc { white-space: nowrap; width: 765px; flex: none; }
.views { display: flex; align-items: center; height: 44px; flex: none; }
.view.on {
  width: 74px;
  height: 44px;
  background: #a6a6a6;
  display: flex;
  align-items: center;
  justify-content: center;
}
.view-ic { margin-left: 21px; flex: none; }
.view-ic.second { margin-left: 43px; }
.z-minus { width: 16px; height: 4px; background: #555; margin-left: 38px; flex: none; }
.slider {
  width: 199px;
  height: 9px;
  margin-left: 14px;
  border-radius: 5px;
  background: #a0a0a0;
  position: relative;
  flex: none;
}
.slider b {
  position: absolute;
  left: 84px;
  top: -12px;
  width: 32px;
  height: 32px;
  border-radius: 50%;
  background: #fff;
  box-shadow: 0 1px 2px rgba(0, 0, 0, 0.3);
}
.z-plus { margin-left: 14px; flex: none; }
.zoom { margin-left: 35px; white-space: nowrap; }
</style>

<style>
html,
body {
  margin: 0;
  background: #fff;
}
</style>
